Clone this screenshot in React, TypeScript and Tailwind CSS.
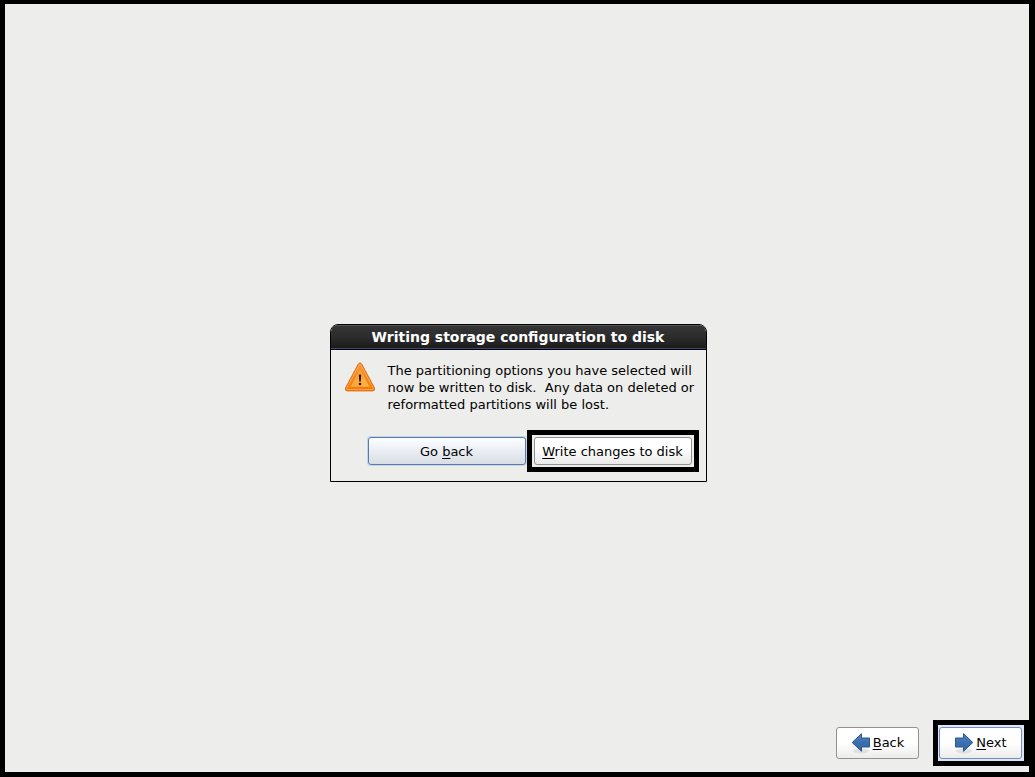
import React from 'react';

const WarningIcon: React.FC = () => (
  <svg width="32" height="32" viewBox="0 0 32 32" className="shrink-0" aria-hidden="true">
    <defs>
      <linearGradient id="warn" x1="0" y1="0" x2="0" y2="1">
        <stop offset="0" stopColor="#f8963a" />
        <stop offset="1" stopColor="#f57900" />
      </linearGradient>
      <linearGradient id="warnInner" x1="0" y1="0" x2="1" y2="1">
        <stop offset="0" stopColor="#fb9a3a" />
        <stop offset="1" stopColor="#fdb648" />
      </linearGradient>
    </defs>
    <path
      d="M14.2 2.2Q16 -0.6 17.8 2.2L30.4 25.8Q31.4 28.9 28.6 28.9H3.4Q0.6 28.9 1.6 25.8Z"
      fill="url(#warn)"
      stroke="#dd6f1a"
      strokeWidth="1"
    />
    <path
      d="M15.2 2.9Q16 1.6 16.8 2.9L29.2 26.2Q29.6 27.6 28.4 27.6H3.6Q2.4 27.6 2.8 26.2Z"
      fill="none"
      stroke="#fbb06a"
      strokeWidth="0.8"
    />
    <path d="M16 7.5L25.5 24.8H6.5Z" fill="url(#warnInner)" />
    <path d="M14.8 12.5H17.2L16.8 19.5H15.2Z" fill="#2e1a06" />
    <circle cx="16" cy="22" r="1.3" fill="#2e1a06" />
  </svg>
);

const ArrowIcon: React.FC<{ direction: 'left' | 'right' }> = ({ direction }) => (
  <svg width="20" height="22" viewBox="0 0 20 22" className="shrink-0" aria-hidden="true">
    <defs>
      <linearGradient id={`arrow-${direction}`} x1="0" y1="0" x2="0" y2="1">
        <stop offset="0" stopColor="#5586c0" />
        <stop offset="0.5" stopColor="#3a6fb0" />
        <stop offset="1" stopColor="#3767a6" />
      </linearGradient>
    </defs>
    <ellipse cx="10" cy="19" rx="8" ry="2.4" fill="#000" opacity="0.08" />
    <path
      d={
        direction === 'left'
          ? 'M1.2 10.5L10.5 1.7V6H18.5V15H10.5V19.3Z'
          : 'M18.8 10.5L9.5 1.7V6H1.5V15H9.5V19.3Z'
      }
      fill={`url(#arrow-${direction})`}
      stroke="#2c5791"
      strokeWidth="1"
    />
  </svg>
);

const dialogButton = 'h-7 w-[158px] rounded-[3px] border pt-px text-center';
const navButton =
  'flex h-8 w-[83px] items-center justify-center gap-0.5 rounded-[3px] border bg-linear-to-b from-white from-50% to-[#ececeb]';

const ConfirmDialog: React.FC = () => (
  <section
    role="dialog"
    aria-labelledby="dialog-title"
    className="w-[377px] overflow-hidden rounded-t-lg border border-black bg-[#ededeb]"
  >
    <h1
      id="dialog-title"
      className="border-b border-black bg-linear-to-b from-[#363636] via-[#2c2c2c] to-[#1a1a1a] text-center text-[14px] leading-6 font-bold text-white shadow-[inset_0_1px_0_#555,inset_0_-1px_0_#3c4a78]"
    >
      Writing storage configuration to disk
    </h1>
    <div className="flex gap-3 px-[13px] pt-3">
      <WarningIcon />
      <p className="leading-[17px] whitespace-pre">
        The partitioning options you have selected will{'\n'}
        now be written to disk.{'  '}Any data on deleted or{'\n'}
        reformatted partitions will be lost.
      </p>
    </div>
    <div className="flex items-center justify-end gap-px pt-[17px] pr-[7px] pb-[9px]">
      <button
        type="button"
        className={`${dialogButton} border-[#5a7aa8] bg-linear-to-b from-[#f8fbff] from-10% to-[#d9dee5] shadow-[0_0_0_1px_#c3d3e8]`}
      >
        Go <u>b</u>ack
      </button>
      <div className="border-5 border-black p-0.5">
        <button
          type="button"
          className={`${dialogButton} block border-[#92928f] bg-linear-to-b from-white from-40% to-[#e9e9e8]`}
        >
          <u>W</u>rite changes to disk
        </button>
      </div>
    </div>
  </section>
);

const App: React.FC = () => {
  return (
    <div className="flex min-h-screen flex-col border-t-4 border-r-6 border-b-5 border-l-5 border-black bg-[#ededeb] font-['DejaVu_Sans',sans-serif] text-[13px] text-black [&_u]:underline-offset-2">
      <main className="flex flex-1 items-center justify-center pt-[82px] pl-0.5">
        <ConfirmDialog />
      </main>
      <footer className="flex items-center justify-end gap-3.5 pb-1.5">
        <button type="button" className={`${navButton} border-[#92928f]`}>
          <ArrowIcon direction="left" />
          <span>
            <u>B</u>ack
          </span>
        </button>
        <div className="border-5 border-black bg-[#dfe6f2] py-0.5 pr-0.5 pl-px">
          <button type="button" className={`${navButton} border-[#6f8fc0]`}>
            <ArrowIcon direction="right" />
            <span>
              <u>N</u>ext
            </span>
          </button>
        </div>
      </footer>
    </div>
  );
};

export default App;
